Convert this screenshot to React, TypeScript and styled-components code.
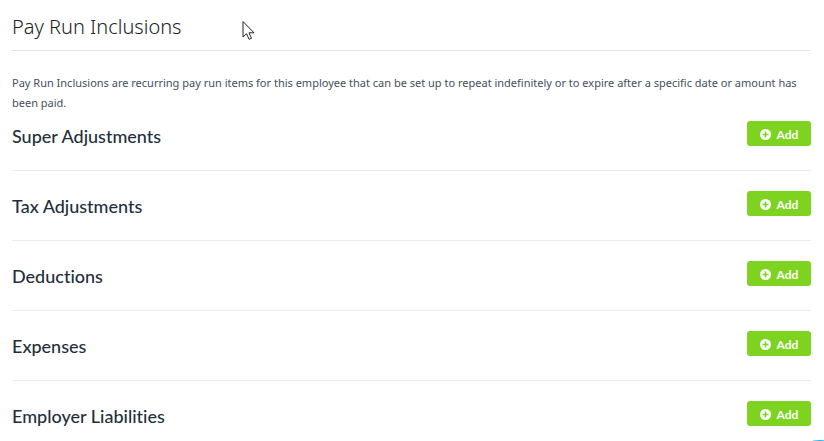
import React from "react";
import styled, { createGlobalStyle } from "styled-components";

const GlobalStyle = createGlobalStyle`
  *, *::before, *::after {
    box-sizing: border-box;
  }

  body {
    margin: 0;
    background: #ffffff;
    color: #44505c;
    font-family: Lato, "Open Sans", sans-serif;
    font-variant-ligatures: none;
    overflow-x: hidden;
  }
`;

const Page = styled.main`
  padding: 12px 13px 0 12px;
`;

const PageHeader = styled.header`
  padding-bottom: 8px;
  border-bottom: 1px solid #e3e3e3;
`;

const PageTitle = styled.h1`
  margin: 0;
  color: #222222;
  font-family: "Noto Sans", sans-serif;
  font-size: 20px;
  font-weight: 300;
  line-height: 30px;
`;

const Intro = styled.p`
  margin: 22px 0 8px;
  font-family: "Noto Sans", sans-serif;
  font-size: 11px;
  line-height: 20px;
`;

const SectionList = styled.ul`
  margin: 0;
  padding: 0;
  list-style: none;
`;

const SectionRow = styled.li`
  display: flex;
  align-items: flex-start;
  justify-content: space-between;
  padding-bottom: 23px;
  margin-bottom: 20px;
  border-bottom: 1px solid #ebebeb;

  &:last-child {
    padding-bottom: 0;
    margin-bottom: 0;
    border-bottom: 0;
  }
`;

const SectionTitle = styled.h2`
  margin: 4px 0 0;
  color: #1f2f3d;
  font-size: 18px;
  font-weight: 500;
  line-height: 22px;
`;

const AddButton = styled.button`
  display: inline-flex;
  align-items: center;
  justify-content: center;
  gap: 6px;
  height: 25px;
  min-width: 64px;
  padding: 2px 12px 0;
  border: 0;
  border-radius: 3px;
  background: #7ed321;
  color: #ffffff;
  font-family: inherit;
  font-size: 12px;
  font-weight: 700;
  line-height: 20px;
  cursor: pointer;
`;

const PlusIcon = styled.svg`
  flex: none;
  width: 11px;
  height: 11px;
`;

const Pointer = styled.svg`
  position: absolute;
  top: 20px;
  left: 242px;
  width: 13px;
  height: 21px;
  pointer-events: none;
`;

const HelpBubble = styled.button`
  position: fixed;
  right: -28px;
  bottom: -63px;
  width: 64px;
  height: 64px;
  padding: 0;
  border: 0;
  border-radius: 50%;
  background: #1fb6e8;
`;

const sections = [
  "Super Adjustments",
  "Tax Adjustments",
  "Deductions",
  "Expenses",
  "Employer Liabilities",
];

function PlusCircle() {
  return (
    <PlusIcon viewBox="0 0 11 11" aria-hidden="true">
      <circle cx="5.5" cy="5.5" r="5.5" fill="#ffffff" />
      <path d="M5.5 2.5v6M2.5 5.5h6" stroke="#7ed321" strokeWidth="1.6" />
    </PlusIcon>
  );
}

export default function App() {
  return (
    <>
      <GlobalStyle />
      <Page>
        <PageHeader>
          <PageTitle>Pay Run Inclusions</PageTitle>
        </PageHeader>
        <Intro>
          Pay Run Inclusions are recurring pay run items for this employee that
          can be set up to repeat indefinitely or to expire after a specific
          date or amount has been paid.
        </Intro>
        <SectionList>
          {sections.map((title) => (
            <SectionRow key={title}>
              <SectionTitle>{title}</SectionTitle>
              <AddButton type="button">
                <PlusCircle />
                Add
              </AddButton>
            </SectionRow>
          ))}
        </SectionList>
      </Page>
      <Pointer viewBox="0 0 13 21" aria-hidden="true">
        <path
          d="M1 1.5V17l3.5-3.3 2.6 5.6 2.4-1-2.5-5.5H12z"
          fill="#ffffff"
          stroke="#20202c"
          strokeWidth="1"
        />
      </Pointer>
      <HelpBubble type="button" aria-label="Help" />
    </>
  );
}
